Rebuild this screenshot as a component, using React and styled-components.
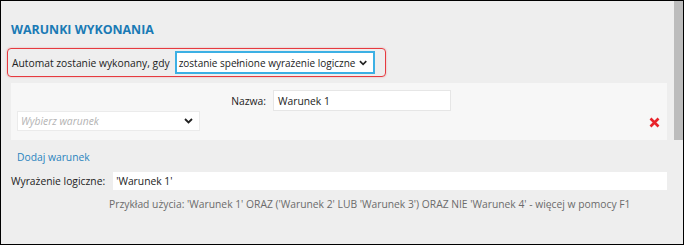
import React from "react";
import styled, { createGlobalStyle } from "styled-components";

const GlobalStyle = createGlobalStyle`
	html, body {
		margin: 0;
		padding: 0;
		background: #ffffff;
	}
	* {
		box-sizing: border-box;
	}
`;

const Chevron = () => (
	<svg width="9" height="6" viewBox="0 0 9 6">
		<path d="M1 1 L4.5 4.5 L8 1" fill="none" stroke="#222" strokeWidth="1.8" />
	</svg>
);

const RemoveIcon = () => (
	<svg width="11" height="11" viewBox="0 0 11 11">
		<path d="M1.5 1.5 L9.5 9.5 M9.5 1.5 L1.5 9.5" stroke="#e8232b" strokeWidth="2.6" />
	</svg>
);

const App = () => {
	return (
		<>
			<GlobalStyle />
			<Frame>
				<Content>
					<Title>WARUNKI WYKONANIA</Title>
					<ModeBox>
						<Label>Automat zostanie wykonany, gdy</Label>
						<ModeSelect>
							<span>zostanie spełnione wyrażenie logiczne</span>
							<Chevron />
						</ModeSelect>
					</ModeBox>

					<ConditionPanel>
						<NameRow>
							<NameLabel>Nazwa:</NameLabel>
							<NameInput>Warunek 1</NameInput>
						</NameRow>
						<SelectRow>
							<ConditionSelect>
								<Placeholder>Wybierz warunek</Placeholder>
								<Chevron />
							</ConditionSelect>
							<RemoveButton>
								<RemoveIcon />
							</RemoveButton>
						</SelectRow>
					</ConditionPanel>

					<AddLink>Dodaj warunek</AddLink>

					<ExpressionRow>
						<Label>Wyrażenie logiczne:</Label>
						<ExpressionInput>'Warunek 1'</ExpressionInput>
					</ExpressionRow>
					<Hint>
						Przykład użycia: 'Warunek 1' ORAZ ('Warunek 2' LUB 'Warunek 3') ORAZ NIE 'Warunek 4' - więcej w pomocy F1
					</Hint>
				</Content>
				<Scrollbar>
					<Thumb />
				</Scrollbar>
			</Frame>
		</>
	);
};

const Frame = styled.div`
	width: 684px;
	height: 245px;
	border: 1px solid #000;
	background-color: #eeeeee;
	display: flex;
	overflow: hidden;
	font-family: "Open Sans", "Noto Sans", sans-serif;
	font-size: 10.3px;
	color: #222;
`;

const Content = styled.div`
	flex: 1;
	min-width: 0;
	padding: 20px 6px 0 10px;
	display: flex;
	flex-direction: column;
	align-items: flex-start;
`;

const Scrollbar = styled.div`
	width: 9px;
	flex-shrink: 0;
	display: flex;
	flex-direction: column;
`;

const Thumb = styled.div`
	height: 139px;
	background-color: #bcbcbc;
`;

const Title = styled.div`
	font-size: 12.4px;
	font-weight: 700;
	color: #1a7ab5;
	line-height: 18px;
`;

const ModeBox = styled.div`
	margin: 9px 0 0 -4px;
	padding: 2px 10px 2px 4px;
	display: inline-flex;
	align-items: center;
	gap: 5px;
	border: 1.5px solid #e63a3f;
	border-radius: 4px;
	box-shadow: 0 0 2px rgba(230, 58, 63, 0.4);
`;

const Label = styled.span`
	white-space: nowrap;
	line-height: 18px;
`;

const ModeSelect = styled.div`
	width: 200px;
	height: 23px;
	padding: 0 5px 0 2px;
	display: flex;
	align-items: center;
	justify-content: space-between;
	gap: 4px;
	background: #fff;
	border: 2px solid #3cb0e4;
	white-space: nowrap;
	font-size: 10px;
`;

const ConditionPanel = styled.div`
	align-self: stretch;
	margin-top: 6px;
	margin-right: 1px;
	padding: 7px 7px 9px 6px;
	background-color: #f7f7f7;
	display: flex;
	flex-direction: column;
`;

const NameRow = styled.div`
	display: flex;
	align-items: center;
	padding-left: 174px;
	gap: 7px;
`;

const NameLabel = styled.span`
	width: 75px;
	text-align: right;
`;

const NameInput = styled.div`
	width: 178px;
	height: 21px;
	padding: 0 4px;
	display: flex;
	align-items: center;
	background: #fff;
	border: 1px solid #e6e6e6;
`;

const SelectRow = styled.div`
	display: flex;
	align-items: center;
	justify-content: space-between;
`;

const ConditionSelect = styled.div`
	width: 183px;
	height: 20px;
	padding: 0 6px 0 3px;
	display: flex;
	align-items: center;
	justify-content: space-between;
	background: #fff;
	border: 1px solid #ebebeb;
`;

const Placeholder = styled.span`
	font-style: italic;
	color: #b3b3b3;
`;

const RemoveButton = styled.div`
	display: flex;
	margin-top: 3px;
`;

const AddLink = styled.div`
	margin: 8px 0 0 6px;
	line-height: 18px;
	color: #2a84be;
`;

const ExpressionRow = styled.div`
	align-self: stretch;
	margin-top: 6px;
	margin-right: 1px;
	display: flex;
	align-items: center;
	gap: 8px;
`;

const ExpressionInput = styled.div`
	flex: 1;
	height: 18px;
	padding: 0 3px;
	display: flex;
	align-items: center;
	background: #fff;
`;

const Hint = styled.div`
	margin: 5px 0 0 98px;
	line-height: 18px;
	color: #6b6b6b;
	white-space: nowrap;
`;

export default App;
